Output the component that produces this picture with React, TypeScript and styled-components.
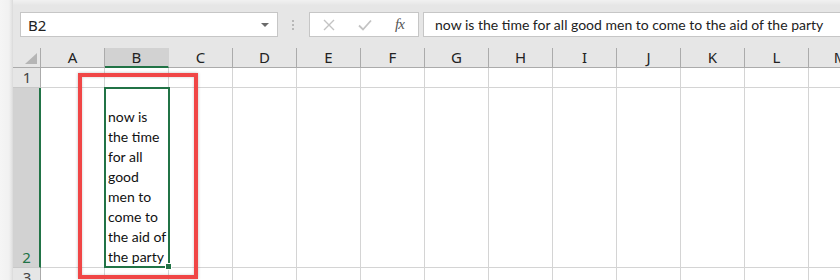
import React from 'react';
import styled, { createGlobalStyle } from 'styled-components';

const Global = createGlobalStyle`
  html, body { margin: 0; padding: 0; background: #e6e6e6; overflow: hidden; }
  body { width: 840px; height: 280px; font-family: "Noto Sans", "Open Sans", sans-serif; }
`;

const Frame = styled.div`
  position: relative;
  display: flex;
  width: 840px;
  height: 280px;
  overflow: hidden;
  background: #e6e6e6;
`;

const LeftStrip = styled.div`
  flex: none;
  width: 13px;
  background: linear-gradient(to right, #f5f5f5 0, #f1f1f1 9px, #e2e2e2 12px, #d8d8d8 13px);
`;

const Main = styled.div`
  flex: 1;
  min-width: 0;
  display: flex;
  flex-direction: column;
  background: linear-gradient(to bottom, #f1f1f1 0, #ebebeb 3px, #e6e6e6 5px);
`;

const FormulaRow = styled.div`
  display: flex;
  align-items: center;
  height: 25px;
  padding: 12px 0 11px 7px;
`;

const NameBox = styled.div`
  position: relative;
  box-sizing: border-box;
  width: 258px;
  height: 25px;
  background: #fff;
  border: 1px solid #c6c6c6;
  display: flex;
  align-items: center;
  padding-left: 7px;
  font-size: 15px;
  color: #222;
`;

const DropArrow = styled.div`
  position: absolute;
  right: 8px;
  top: 10px;
  width: 0;
  height: 0;
  border-left: 4px solid transparent;
  border-right: 4px solid transparent;
  border-top: 4px solid #6a6a6a;
`;

const Dots = styled.div`
  display: flex;
  flex-direction: column;
  gap: 2px;
  margin: 0 15px 0 14px;
  span {
    width: 2px;
    height: 2px;
    background: #b8b8b8;
  }
`;

const FuncBox = styled.div`
  box-sizing: border-box;
  width: 110px;
  height: 25px;
  background: #fff;
  border: 1px solid #c6c6c6;
  display: flex;
  align-items: center;
  padding-left: 13px;
  gap: 23px;
`;

const Fx = styled.span`
  font-family: "Liberation Serif", "DejaVu Serif", serif;
  font-style: italic;
  font-size: 15px;
  color: #555;
  letter-spacing: -1px;
`;

const FormulaInput = styled.div`
  box-sizing: border-box;
  flex: 1;
  margin-left: 4px;
  height: 25px;
  background: #fff;
  border: 1px solid #c6c6c6;
  border-right: none;
  display: flex;
  align-items: center;
  padding-left: 11px;
  font-family: "Lato", "Noto Sans", sans-serif;
  font-size: 14px;
  color: #222;
  white-space: nowrap;
  overflow: hidden;
`;

const Sheet = styled.div`
  display: grid;
  grid-template-columns: 28px repeat(13, 64px);
  grid-template-rows: 20px 20px 180px 20px;
`;

const Corner = styled.div`
  position: relative;
  box-sizing: border-box;
  background: #e6e6e6;
  border-right: 1px solid #ababab;
  border-bottom: 1px solid #ababab;
`;

const CornerTri = styled.div`
  position: absolute;
  right: 3px;
  bottom: 3px;
  width: 0;
  height: 0;
  border-left: 12px solid transparent;
  border-bottom: 11px solid #b5b5b5;
`;

const ColHead = styled.div<{ $sel?: boolean }>`
  box-sizing: border-box;
  background: ${(p) => (p.$sel ? '#d2d2d2' : '#e6e6e6')};
  border-right: 1px solid ${(p) => (p.$sel ? '#d2d2d2' : '#ababab')};
  border-bottom: ${(p) => (p.$sel ? '2px solid #217346' : '1px solid #ababab')};
  display: flex;
  align-items: center;
  justify-content: center;
  font-size: 15px;
  color: #222;
  padding-bottom: ${(p) => (p.$sel ? '0' : '1px')};
`;

const RowHead = styled.div<{ $sel?: boolean }>`
  box-sizing: border-box;
  background: ${(p) => (p.$sel ? '#d2d2d2' : '#e6e6e6')};
  border-right: ${(p) => (p.$sel ? '2px solid #217346' : '1px solid #ababab')};
  border-bottom: 1px solid #c8c8c8;
  display: flex;
  align-items: flex-end;
  justify-content: center;
  font-size: 15px;
  line-height: 20px;
  color: ${(p) => (p.$sel ? '#217346' : '#444')};
  padding-left: 1px;
`;

const Cell = styled.div<{ $active?: boolean }>`
  position: relative;
  z-index: ${(p) => (p.$active ? 2 : 'auto')};
  box-sizing: border-box;
  background: #fff;
  border-right: 1px solid #d4d4d4;
  border-bottom: 1px solid #d4d4d4;
`;

const WrapText = styled.div`
  position: absolute;
  left: 3px;
  right: 0;
  bottom: 0;
  font-family: "Lato", "Noto Sans", sans-serif;
  font-size: 14px;
  line-height: 20px;
  color: #111;
  white-space: pre;
`;

const Selection = styled.div`
  position: absolute;
  left: -1px;
  top: -1px;
  right: -2px;
  bottom: -1px;
  border: 2px solid #217346;
  pointer-events: none;
`;

const FillHandle = styled.div`
  position: absolute;
  right: -4px;
  bottom: -4px;
  width: 5px;
  height: 5px;
  background: #217346;
  border: 1px solid #fff;
`;

const Annotation = styled.div`
  position: absolute;
  z-index: 5;
  left: 78px;
  top: 73px;
  width: 120px;
  height: 206px;
  box-sizing: border-box;
  border: 4px solid #f04646;
  box-shadow: 0 0 3px rgba(0, 0, 0, 0.25), inset 0 0 3px rgba(0, 0, 0, 0.2);
  pointer-events: none;
`;

const cols = ['A', 'B', 'C', 'D', 'E', 'F', 'G', 'H', 'I', 'J', 'K', 'L', 'M'];

const XIcon = () => (
  <svg width="12" height="12" viewBox="0 0 12 12">
    <path d="M1 1 L11 11 M11 1 L1 11" stroke="#c3c3c3" strokeWidth="1.4" fill="none" />
  </svg>
);

const CheckIcon = () => (
  <svg width="14" height="12" viewBox="0 0 14 12">
    <path d="M1 6.5 L5 10.5 L13 1.5" stroke="#c3c3c3" strokeWidth="1.8" fill="none" />
  </svg>
);

export default function App() {
  const text = 'now is\nthe time\nfor all\ngood\nmen to\ncome to\nthe aid of\nthe party';
  return (
    <>
      <Global />
      <Frame>
        <LeftStrip />
        <Main>
          <FormulaRow>
            <NameBox>
              B2
              <DropArrow />
            </NameBox>
            <Dots>
              <span />
              <span />
              <span />
            </Dots>
            <FuncBox>
              <XIcon />
              <CheckIcon />
              <Fx>fx</Fx>
            </FuncBox>
            <FormulaInput>now is the time for all good men to come to the aid of the party</FormulaInput>
          </FormulaRow>
          <Sheet>
            <Corner>
              <CornerTri />
            </Corner>
            {cols.map((c) => (
              <ColHead key={c} $sel={c === 'B'}>
                {c}
              </ColHead>
            ))}
            <RowHead>1</RowHead>
            {cols.map((c) => (
              <Cell key={'1' + c} />
            ))}
            <RowHead $sel>2</RowHead>
            {cols.map((c) => (
              <Cell key={'2' + c} $active={c === 'B'}>
                {c === 'B' && (
                  <>
                    <WrapText>{text}</WrapText>
                    <Selection>
                      <FillHandle />
                    </Selection>
                  </>
                )}
              </Cell>
            ))}
            <RowHead>3</RowHead>
            {cols.map((c) => (
              <Cell key={'3' + c} />
            ))}
          </Sheet>
        </Main>
        <Annotation />
      </Frame>
    </>
  );
}
